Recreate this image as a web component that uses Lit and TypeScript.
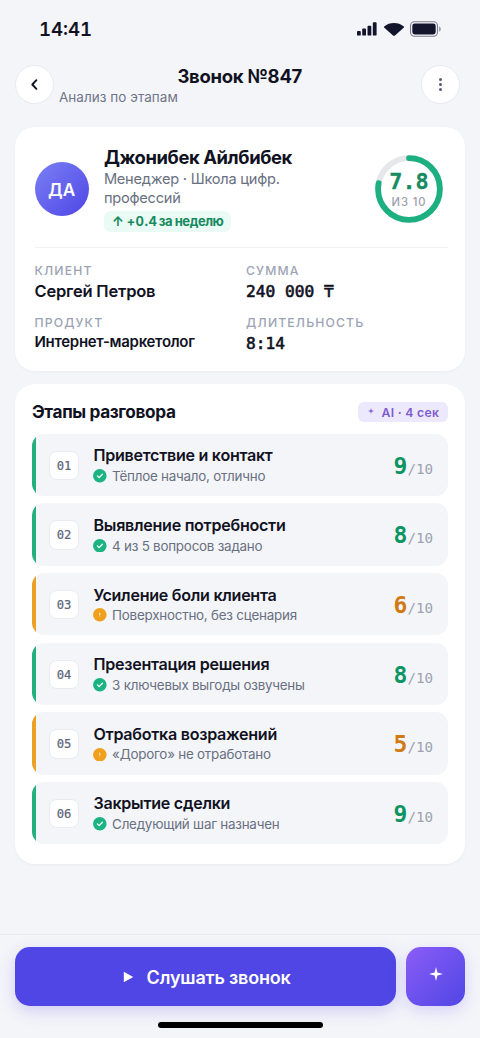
import { LitElement, html, svg, css } from "lit";
import { customElement, property } from "lit/decorators.js";

type Status = "ok" | "warn";

interface Stage {
  num: string;
  title: string;
  note: string;
  score: number;
  status: Status;
}

const STAGES: Stage[] = [
  { num: "01", title: "Приветствие и контакт", note: "Тёплое начало, отлично", score: 9, status: "ok" },
  { num: "02", title: "Выявление потребности", note: "4 из 5 вопросов задано", score: 8, status: "ok" },
  { num: "03", title: "Усиление боли клиента", note: "Поверхностно, без сценария", score: 6, status: "warn" },
  { num: "04", title: "Презентация решения", note: "3 ключевых выгоды озвучены", score: 8, status: "ok" },
  { num: "05", title: "Отработка возражений", note: "«Дорого» не отработано", score: 5, status: "warn" },
  { num: "06", title: "Закрытие сделки", note: "Следующий шаг назначен", score: 9, status: "ok" },
];

@customElement("stage-row")
export class StageRow extends LitElement {
  @property({ attribute: false }) stage!: Stage;

  static styles = css`
    :host { display: block; }
    .row {
      display: flex;
      height: 62.4px;
      border-radius: 12.2px;
      overflow: hidden;
      background: #f4f5f9;
      align-items: center;
    }
    .bar { align-self: stretch; width: 3.8px; background: #22b07d; }
    .warn .bar { background: #eba026; }
    .num {
      box-sizing: border-box;
      width: 29.3px;
      height: 29.3px;
      margin: 1px 0 0 13.6px;
      border: 1.2px solid #e9ebf0;
      border-radius: 7.5px;
      background: #fff;
      color: #5b6478;
      font: 500 12.2px/28px "DejaVu Sans Mono", monospace;
      -webkit-text-stroke: 0.2px #5b6478;
      text-align: center;
    }
    .body { flex: 1; margin-left: 14.8px; padding-top: 1.2px; }
    .title {
      font-size: 16.1px;
      line-height: 20.6px;
      font-weight: 600;
      color: #11121f;
      letter-spacing: -0.28px;
      white-space: nowrap;
    }
    .note {
      display: flex;
      align-items: center;
      gap: 5px;
      font-size: 13.4px;
      line-height: 20px;
      letter-spacing: -0.23px;
      color: #697080;
      white-space: nowrap;
    }
    .note svg { width: 13.6px; height: 13.6px; flex: none; }
    .score {
      margin: 4.5px 15px 0 0;
      font: 700 23px/28px "DejaVu Sans Mono", monospace;
      color: #0c9463;
      white-space: nowrap;
    }
    .warn .score { color: #d07a14; }
    .of { font-size: 14.2px; font-weight: 400; color: #9ca3af; }
  `;

  render() {
    const s = this.stage;
    return html`
      <div class="row ${s.status}">
        <div class="bar"></div>
        <div class="num">${s.num}</div>
        <div class="body">
          <div class="title">${s.title}</div>
          <div class="note">
            <svg viewBox="0 0 14 14">
              ${s.status === "ok"
                ? svg`<circle cx="7" cy="7" r="7" fill="#1bb380"/><path d="M4.5 7.1 6.3 8.9 9.7 5.4" fill="none" stroke="#fff" stroke-width="1.3" stroke-linecap="round" stroke-linejoin="round"/>`
                : svg`<circle cx="7" cy="7" r="7" fill="#f0a01c"/><path d="M7 4.8v2.9M7 8.9v.5" fill="none" stroke="#fff" stroke-opacity=".85" stroke-width="1"/>`}
            </svg>
            <span>${s.note}</span>
          </div>
        </div>
        <div class="score">${s.score}<span class="of">/10</span></div>
      </div>
    `;
  }
}

@customElement("app-root")
export class AppRoot extends LitElement {
  static styles = css`
    :host {
      display: flex;
      flex-direction: column;
      box-sizing: border-box;
      width: 100%;
      height: 100vh;
      overflow: hidden;
      background: #f4f5f9;
      color: #11121f;
      font-family: Inter, "Noto Sans", sans-serif;
    }
    .status {
      display: flex;
      align-items: center;
      justify-content: space-between;
      height: 58px;
      padding: 0 38px 0 39px;
      flex: none;
    }
    .time {
      font-size: 18.6px;
      font-weight: 600;
      font-variant-numeric: tabular-nums;
    }
    .sys { display: block; width: 86px; height: 16px; }
    .head {
      display: flex;
      gap: 5px;
      height: 39px;
      margin: 7px 20px 0 15px;
      flex: none;
    }
    .round {
      box-sizing: border-box;
      width: 39px;
      height: 39px;
      border: 1.2px solid #e8eaef;
      border-radius: 50%;
      background: #fff;
      display: flex;
      align-items: center;
      justify-content: center;
      flex: none;
    }
    .round svg { width: 19px; height: 19px; }
    .heading { flex: 1; }
    .h-title {
      padding-left: 4.5px;
      font-size: 18.5px;
      line-height: 22px;
      font-weight: 700;
      text-align: center;
      letter-spacing: -0.27px;
    }
    .h-sub { font-size: 13.5px; line-height: 20px; color: #6f7587; letter-spacing: 0.03px; }
    .card {
      box-sizing: border-box;
      margin: 0 15px;
      border-radius: 20px;
      background: #fff;
      box-shadow: 0 1px 3px rgba(20, 25, 50, 0.04);
      flex: none;
    }
    .person-card { margin-top: 22.5px; height: 244.5px; padding: 18.5px 17.5px 0 19.5px; }
    .person { display: flex; align-items: center; height: 87.5px; padding-right: 5px; }
    .avatar {
      width: 54.4px;
      height: 54.4px;
      border-radius: 50%;
      background: linear-gradient(135deg, #7a80f5, #4f46e5);
      color: #fff;
      font-size: 17.2px;
      line-height: 56px;
      font-weight: 600;
      text-align: center;
      flex: none;
    }
    .who { flex: 1; margin-left: 15px; }
    .name { font-size: 18.4px; line-height: 24px; font-weight: 700; letter-spacing: -0.4px; white-space: nowrap; }
    .role { margin-top: 1px; font-size: 14.6px; line-height: 18.3px; color: #697080; letter-spacing: -0.23px; }
    .chip {
      display: inline-block;
      box-sizing: border-box;
      height: 21.5px;
      width: 127px;
      margin-top: 4px;
      padding-left: 8px;
      border-radius: 7px;
      background: #eafaf4;
      color: #178a60;
      font-size: 13px;
      line-height: 21.5px;
      font-weight: 700;
      letter-spacing: -0.45px;
      white-space: nowrap;
      vertical-align: top;
    }
    .delta { font-variant-numeric: tabular-nums; letter-spacing: 0.5px; margin: 0 -1.3px 0 0.8px; }
    .ring { display: grid; width: 68px; height: 68px; flex: none; }
    .ring > * { grid-area: 1 / 1; }
    .ring svg { width: 68px; height: 68px; }
    .ring-text { display: flex; flex-direction: column; align-items: center; padding-top: 13px; }
    .ring-num { font: 700 21.8px/27px "DejaVu Sans Mono", monospace; color: #178a60; -webkit-text-stroke: 0.3px #178a60; padding-left: 1px; }
    .ring-of { font-size: 11.2px; line-height: 15px; font-weight: 500; color: #9aa1ae; letter-spacing: 0.9px; padding-left: 1px; }
    .divider { height: 1.2px; margin-top: 14.5px; background: #f1f2f5; }
    .facts { display: grid; grid-template-columns: 211.5px 1fr; row-gap: 11.5px; margin-top: 14.7px; }
    .label { font-size: 12.2px; line-height: 16px; font-weight: 500; color: #9ca3b4; letter-spacing: 1.15px; }
    .value { margin-top: 2px; font-size: 16.5px; line-height: 20px; font-weight: 600; letter-spacing: -0.2px; white-space: nowrap; }
    .value.small { margin-top: 1px; font-size: 15px; letter-spacing: -0.3px; }
    .value.mono { margin-top: 2.5px; font: 400 16.2px/22px "DejaVu Sans Mono", monospace; letter-spacing: 0; -webkit-text-stroke: 0.6px #11121f; }
    .stages-card { margin-top: 13px; height: 480px; padding: 17px 17px 0 17px; }
    .stages-head { display: flex; align-items: center; justify-content: space-between; height: 22px; }
    .stages-title { font-size: 17.2px; font-weight: 700; letter-spacing: -0.36px; margin-top: -1px; }
    .ai {
      display: flex;
      align-items: center;
      box-sizing: border-box;
      width: 90px;
      height: 20px;
      padding-left: 10px;
      border-radius: 6px;
      background: #ece9fc;
      color: #7f5bd0;
      font-size: 12.2px;
      font-weight: 600;
      letter-spacing: 0.3px;
      white-space: nowrap;
    }
    .ai svg { width: 6px; height: 6px; margin: 0 7.5px 3px 0; }
    .list { display: flex; flex-direction: column; gap: 7.25px; margin-top: 10.8px; }
    .footer {
      display: flex;
      align-items: flex-start;
      gap: 10px;
      box-sizing: border-box;
      height: 104.5px;
      margin-top: auto;
      padding: 12px 15px 0;
      border-top: 1.2px solid #e8eaef;
      flex: none;
      position: relative;
    }
    .btn {
      display: flex;
      align-items: center;
      justify-content: center;
      box-sizing: border-box;
      height: 59px;
      border-radius: 15px;
      color: #fff;
    }
    .listen {
      flex: 1;
      gap: 12.3px;
      padding: 2px 0 0 3px;
      background: #4f46e5;
      box-shadow: 0 5px 16px rgba(79, 70, 229, 0.22);
      font-size: 18px;
      font-weight: 600;
      letter-spacing: -0.18px;
    }
    .listen svg { width: 11px; height: 12px; }
    .magic {
      width: 59px;
      background: linear-gradient(135deg, #8b5cf6, #4f46e5);
      box-shadow: 0 5px 16px rgba(110, 80, 240, 0.22);
    }
    .magic svg { width: 14px; height: 14px; margin-bottom: 5px; }
    .home {
      position: absolute;
      left: 157.5px;
      bottom: 10px;
      width: 165px;
      height: 6px;
      border-radius: 3px;
      background: #000;
    }
  `;

  render() {
    return html`
      <div class="status">
        <div class="time">14:41</div>
        <svg class="sys" viewBox="0 0 86 16" fill="#12152b">
          <rect x="1" y="10" width="3.8" height="4.6" rx=".9" />
          <rect x="6.2" y="7.6" width="3.8" height="7" rx=".9" />
          <rect x="11.5" y="4.8" width="3.8" height="9.8" rx=".9" />
          <rect x="16.8" y="1.2" width="3.8" height="13.4" rx=".9" />
          <path d="M28.2 5.4C33.6.8 42.4.8 47.8 5.4c.4.3.4.8.1 1.1l-8.6 7.700c-.8.7-1.800.7-2.600 0l-8.600-7.700c-.3-.3-.3-.8.1-1.100Z" />
          <rect x="54.5" y=".8" width="27" height="14.4" rx="4" fill="none" stroke="#7b7d8c" stroke-width="1.1" />
          <rect x="56.3" y="2.6" width="23.4" height="10.8" rx="2.4" />
          <path d="M83.2 5.4c2 .5 2 4.700 0 5.200Z" fill="#8d8f9c" />
        </svg>
      </div>

      <div class="head">
        <div class="round">
          <svg viewBox="0 0 19 19"><path d="M11.400 5.200 7.300 9.500 11.400 13.800" fill="none" stroke="#11121f" stroke-width="1.9" stroke-linecap="round" stroke-linejoin="round" /></svg>
        </div>
        <div class="heading">
          <div class="h-title">Звонок №847</div>
          <div class="h-sub">Анализ по этапам</div>
        </div>
        <div class="round">
          <svg viewBox="0 0 19 19" fill="#555b6e"><circle cx="9.500" cy="4.400" r="1.500" /><circle cx="9.500" cy="9.500" r="1.500" /><circle cx="9.500" cy="14.600" r="1.500" /></svg>
        </div>
      </div>

      <section class="card person-card">
        <div class="person">
          <div class="avatar">ДА</div>
          <div class="who">
            <div class="name">Джонибек Айлбибек</div>
            <div class="role">Менеджер · Школа цифр.<br />профессий</div>
            <div class="chip">↑ <span class="delta">+0.4</span> за неделю</div>
          </div>
          <div class="ring">
            <svg viewBox="0 0 68 68" fill="none" stroke-width="5.800">
              <circle cx="34" cy="34" r="30.900" stroke="#e6e7ea" />
              <circle cx="34" cy="34" r="30.900" stroke="#1caf80" stroke-linecap="round" pathLength="100" stroke-dasharray="78 100" transform="rotate(-90 34 34)" />
            </svg>
            <div class="ring-text">
              <div class="ring-num">7.8</div>
              <div class="ring-of">ИЗ 10</div>
            </div>
          </div>
        </div>
        <div class="divider"></div>
        <div class="facts">
          <div><div class="label">КЛИЕНТ</div><div class="value">Сергей Петров</div></div>
          <div><div class="label">СУММА</div><div class="value mono">240 000 ₸</div></div>
          <div><div class="label">ПРОДУКТ</div><div class="value small">Интернет-маркетолог</div></div>
          <div><div class="label">ДЛИТЕЛЬНОСТЬ</div><div class="value mono">8:14</div></div>
        </div>
      </section>

      <section class="card stages-card">
        <div class="stages-head">
          <div class="stages-title">Этапы разговора</div>
          <div class="ai">
            <svg viewBox="0 0 14 14" fill="#7f5bd0"><path d="M7 0 8.600 5.400 14 7 8.600 8.600 7 14 5.400 8.600 0 7 5.400 5.400Z" /></svg>
            <span>AI · 4 сек</span>
          </div>
        </div>
        <div class="list">${STAGES.map((s) => html`<stage-row .stage=${s}></stage-row>`)}</div>
      </section>

      <div class="footer">
        <div class="btn listen">
          <svg viewBox="0 0 11 12" fill="#fff"><path d="M.8.8 10.200 6 .8 11.200Z" /></svg>
          <span>Слушать звонок</span>
        </div>
        <div class="btn magic">
          <svg viewBox="0 0 14 14" fill="#fff"><path d="M7 0 8.400 5.600 14 7 8.400 8.400 7 14 5.600 8.400 0 7 5.600 5.600Z" /></svg>
        </div>
        <div class="home"></div>
      </div>
    `;
  }
}
